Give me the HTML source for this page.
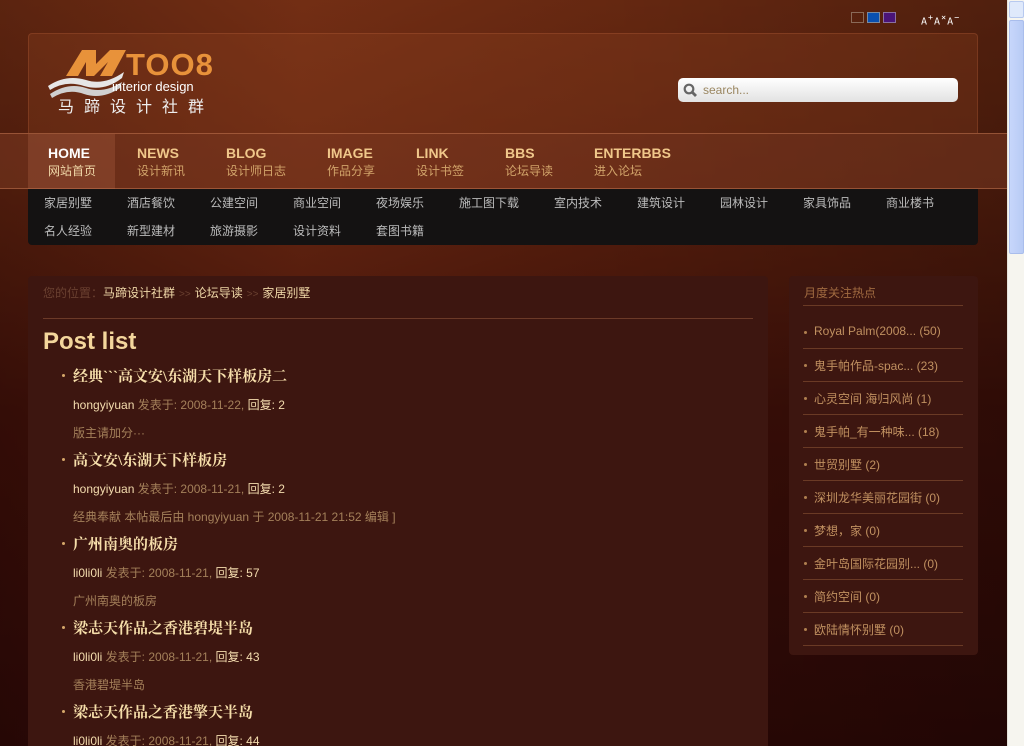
<!DOCTYPE html>
<html><head><meta charset="utf-8"><style>
*{margin:0;padding:0;box-sizing:border-box}
html,body{width:1024px;height:746px;overflow:hidden}
body{position:relative;font-family:"Liberation Sans","Noto Sans CJK SC",sans-serif;font-size:12px;
background:linear-gradient(180deg,#6b2a12 0%,#5a200e 25%,#3d0f08 55%,#2c0806 100%);}
.bgw{position:absolute;left:0;top:0;width:1007px;height:746px;background:linear-gradient(90deg,rgba(0,0,0,.15),rgba(255,120,60,.05) 30%,rgba(0,0,0,.05) 60%,rgba(0,0,0,.25));}
.sb{position:absolute;left:1007px;top:0;width:17px;height:746px;background:#f6f5ef;border-left:1px solid #e6e3da}
.sb .t{position:absolute;left:1px;top:1px;width:15px;height:17px;background:#dfe9fb;border:1px solid #b7c9ef;border-radius:2px}
.sb .th{position:absolute;left:1px;top:20px;width:15px;height:234px;background:linear-gradient(90deg,#c7d6fb,#b8cbf5);border:1px solid #a9bdec;border-radius:2px}
.top{position:absolute;top:12px;left:851px;display:flex;gap:3px}
.top i{display:block;width:13px;height:11px;border:1px solid #8a6a58}
.fs{position:absolute;left:921px;top:12px;color:#fff;font-size:10px;letter-spacing:1px;font-family:"DejaVu Sans Mono",monospace}
.hdr{position:absolute;left:28px;top:33px;width:950px;height:100px;background:rgba(150,70,35,.25);border:1px solid rgba(200,110,70,.25);border-bottom:none;border-radius:4px 4px 0 0}
.logo{position:absolute;left:46px;top:44px}
.search{position:absolute;left:678px;top:78px;width:280px;height:24px;border-radius:5px;background:linear-gradient(#fff,#e2e2e2);}
.search span{position:absolute;left:25px;top:5px;color:#9a8660;font-size:12px}
.nav{position:absolute;left:0;top:133px;width:1007px;height:56px;background:rgba(150,75,45,.35);border-top:1px solid rgba(210,130,90,.45);border-bottom:1px solid rgba(210,130,90,.45)}
.nav .hl{position:absolute;left:28px;top:0;width:87px;height:55px;background:rgba(190,110,80,.25)}
.nav div.i{position:absolute;top:11px;font-weight:bold;font-size:14px;color:#f0c78a}
.nav div.i small{display:block;font-weight:normal;font-size:12px;color:#d2a46a;margin-top:1px}
.sub{position:absolute;left:28px;top:189px;width:950px;height:56px;background:#141212;border-radius:0 0 4px 4px}
.sub span{position:absolute;color:#bbb;font-size:12px}
.main{position:absolute;left:28px;top:276px;width:740px;height:470px;background:#3d1610;border-radius:4px 4px 0 0}
.crumb{position:absolute;left:15px;top:8px;color:#6a4030}
.crumb b{font-weight:normal;color:#f0d8a8}
.crumb em{font-style:normal;color:#6a4030;font-size:10px;margin:0 4px}
.hr{position:absolute;left:15px;top:42px;width:710px;border-top:1px solid #6c3a28}
h1{position:absolute;left:15px;top:52px;font-size:24px;color:#f4d69c;font-family:"Liberation Sans",sans-serif}
.p{position:absolute;left:45px;color:#f6deaa;white-space:nowrap}
.tt{font-weight:bold;font-size:15px;font-family:"Liberation Serif","Noto Serif CJK SC",serif;margin-top:-1px}
.tt:before{content:"";position:absolute;left:-11px;top:9px;width:3px;height:3px;border-radius:50%;background:#d7a86a}
.m{color:#a4805a;margin-top:-1px}.m b{font-weight:normal;color:#f4dcae}
.d{color:#a4805a;margin-top:-1px}
.side{position:absolute;left:789px;top:276px;width:189px;height:379px;background:#3d1610;border-radius:4px}
.side h3{position:absolute;left:15px;top:8px;font-weight:normal;font-size:12px;color:#a06a40}
.side .l{position:absolute;left:14px;width:160px;border-top:1px solid #6a3a25}
.side .it{position:absolute;left:25px;color:#c09060;white-space:nowrap}
.side .it:before{content:"";position:absolute;left:-10px;top:7px;width:3px;height:3px;border-radius:50%;background:#b08050}
</style></head><body>
<div class="bgw"></div>
<div class="top"><i style="background:transparent"></i><i style="background:#0a50b0;border-color:#7a8aa0"></i><i style="background:#4a1478;border-color:#8a70a0"></i></div>
<div class="fs">A<sup>+</sup>A<sup>×</sup>A<sup>−</sup></div>
<div class="hdr"></div>
<div class="logo">
<svg width="185" height="74" viewBox="0 0 185 74">
<path d="M20 32 L36 6 L50 6 L50 20 L64 6 L80 6 L66 32 L54 32 L62 18 L48 32 L40 32 L40 18 L32 32Z" fill="#e8923a"/>
<path d="M2 42 Q20 30 40 36 Q58 42 78 28 L76 34 Q58 48 38 42 Q20 36 4 46Z" fill="#e6e6e6"/>
<path d="M4 50 Q22 38 40 44 Q58 50 76 38 L74 44 Q56 56 38 50 Q22 44 6 54Z" fill="#d0d0d0"/>
<text x="80" y="31" font-family="Liberation Sans,sans-serif" font-weight="bold" font-size="31" fill="#e8923a" letter-spacing="1">TOO8</text>
<text x="66" y="47" font-family="Liberation Sans,sans-serif" font-size="13" fill="#fff">interior design</text>
<text x="12" y="68" font-family="Noto Sans CJK SC,sans-serif" font-size="16" fill="#eee" letter-spacing="10">马蹄设计社群</text>
</svg></div>
<div class="search"><svg style="position:absolute;left:5px;top:5px" width="14" height="14"><circle cx="6" cy="6" r="4.3" fill="none" stroke="#666" stroke-width="2.2"/><path d="M9 9 L13 13" stroke="#666" stroke-width="2.8"/></svg><span>search...</span></div>
<div class="nav"><div class="hl"></div>
<div class="i" style="left:48px;color:#fff">HOME<small style="color:#f0d8a8">网站首页</small></div>
<div class="i" style="left:137px">NEWS<small>设计新讯</small></div>
<div class="i" style="left:226px">BLOG<small>设计师日志</small></div>
<div class="i" style="left:327px">IMAGE<small>作品分享</small></div>
<div class="i" style="left:416px">LINK<small>设计书签</small></div>
<div class="i" style="left:505px">BBS<small>论坛导读</small></div>
<div class="i" style="left:594px">ENTERBBS<small>进入论坛</small></div>
</div>
<div class="sub">
<span style="left:16px;top:5px">家居别墅</span><span style="left:99px;top:5px">酒店餐饮</span><span style="left:182px;top:5px">公建空间</span><span style="left:265px;top:5px">商业空间</span><span style="left:348px;top:5px">夜场娱乐</span><span style="left:431px;top:5px">施工图下载</span><span style="left:526px;top:5px">室内技术</span><span style="left:609px;top:5px">建筑设计</span><span style="left:692px;top:5px">园林设计</span><span style="left:775px;top:5px">家具饰品</span><span style="left:858px;top:5px">商业楼书</span>
<span style="left:16px;top:33px">名人经验</span><span style="left:99px;top:33px">新型建材</span><span style="left:182px;top:33px">旅游摄影</span><span style="left:265px;top:33px">设计资料</span><span style="left:348px;top:33px">套图书籍</span>
</div>
<div class="main">
<div class="crumb">您的位置：<b>马蹄设计社群</b><em>&gt;&gt;</em><b>论坛导读</b><em>&gt;&gt;</em><b>家居别墅</b></div>
<div class="hr"></div>
<h1>Post list</h1>
<div class="p tt" style="top:90px">经典&#96;&#96;&#96;高文安\东湖天下样板房二</div>
<div class="p m" style="top:121px"><b>hongyiyuan</b> 发表于: 2008-11-22, <b>回复: 2</b></div>
<div class="p d" style="top:149px">版主请加分···</div>
<div class="p tt" style="top:174px">高文安\东湖天下样板房</div>
<div class="p m" style="top:205px"><b>hongyiyuan</b> 发表于: 2008-11-21, <b>回复: 2</b></div>
<div class="p d" style="top:233px">经典奉献 本帖最后由 hongyiyuan 于 2008-11-21 21:52 编辑 ]</div>
<div class="p tt" style="top:258px">广州南奥的板房</div>
<div class="p m" style="top:289px"><b>li0li0li</b> 发表于: 2008-11-21, <b>回复: 57</b></div>
<div class="p d" style="top:317px">广州南奥的板房</div>
<div class="p tt" style="top:342px">梁志天作品之香港碧堤半岛</div>
<div class="p m" style="top:373px"><b>li0li0li</b> 发表于: 2008-11-21, <b>回复: 43</b></div>
<div class="p d" style="top:401px">香港碧堤半岛</div>
<div class="p tt" style="top:426px">梁志天作品之香港擎天半岛</div>
<div class="p m" style="top:457px"><b>li0li0li</b> 发表于: 2008-11-21, <b>回复: 44</b></div>
</div>
<div class="side"><h3>月度关注热点</h3>
<div class="l" style="top:29px"></div>
<div class="it" style="top:48px">Royal Palm(2008... (50)</div><div class="l" style="top:72px"></div>
<div class="it" style="top:81px">鬼手帕作品-spac... (23)</div><div class="l" style="top:105px"></div>
<div class="it" style="top:114px">心灵空间 海归风尚 (1)</div><div class="l" style="top:138px"></div>
<div class="it" style="top:147px">鬼手帕_有一种味... (18)</div><div class="l" style="top:171px"></div>
<div class="it" style="top:180px">世贸别墅 (2)</div><div class="l" style="top:204px"></div>
<div class="it" style="top:213px">深圳龙华美丽花园街 (0)</div><div class="l" style="top:237px"></div>
<div class="it" style="top:246px">梦想，家 (0)</div><div class="l" style="top:270px"></div>
<div class="it" style="top:279px">金叶岛国际花园别... (0)</div><div class="l" style="top:303px"></div>
<div class="it" style="top:312px">简约空间 (0)</div><div class="l" style="top:336px"></div>
<div class="it" style="top:345px">欧陆情怀别墅 (0)</div><div class="l" style="top:369px"></div>
</div>
<div class="sb"><div class="t"></div><div class="th"></div></div>
</body></html>
